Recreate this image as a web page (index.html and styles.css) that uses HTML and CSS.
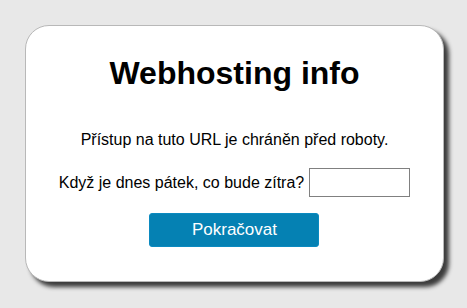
FILE: index.html
```html
<!DOCTYPE html>
<html lang="cs">
<head>
<meta charset="utf-8">
<title>Webhosting info</title>
<link rel="stylesheet" href="styles.css">
</head>
<body>
<div class="card">
  <h1 class="title">Webhosting info</h1>
  <p class="notice">Přístup na tuto URL je chráněn před roboty.</p>
  <form class="form" onsubmit="return false">
    <div class="row">
      <label class="question" for="answer">Když je dnes pátek, co bude zítra?</label>
      <input class="answer" id="answer" type="text">
    </div>
    <button class="submit" type="submit">Pokračovat</button>
  </form>
</div>
</body>
</html>
```

FILE: styles.css
```css
html, body {
  margin: 0;
  padding: 0;
}
body {
  background: #e8e8e8;
  font-family: "Liberation Sans", Arial, sans-serif;
  color: #000;
  width: 467px;
  height: 308px;
  overflow: hidden;
}
.card {
  box-sizing: border-box;
  margin: 25px 0 0 25px;
  width: 419px;
  height: 257px;
  background: #fff;
  border: 1px solid #b8b8b8;
  border-radius: 24px;
  box-shadow: 5px 5px 4px #3c3c3c;
  display: flex;
  flex-direction: column;
  align-items: center;
  padding-top: 29px;
}
.title {
  margin: 0 0 39px;
  font-size: 32px;
  line-height: 37px;
  font-weight: bold;
}
.notice {
  margin: 0 0 19px;
  font-size: 16px;
  line-height: 18px;
}
.form {
  display: flex;
  flex-direction: column;
  align-items: center;
  margin: 0;
}
.row {
  display: flex;
  align-items: center;
  gap: 5px;
  height: 29px;
  margin-bottom: 16px;
}
.question {
  font-size: 16px;
  line-height: 18px;
}
.answer {
  box-sizing: border-box;
  width: 101px;
  height: 29px;
  border: 1px solid #808080;
  border-radius: 0;
  padding: 2px 4px;
  margin: 0;
  font-family: inherit;
  font-size: 16px;
  background: #fff;
}
.submit {
  box-sizing: border-box;
  width: 170px;
  height: 34px;
  background: #0581b3;
  border: 1px solid #0b8ac0;
  border-radius: 3px;
  color: #fff;
  font-family: "Liberation Sans", Arial, sans-serif;
  font-size: 17px;
  padding: 0;
  cursor: pointer;
}
```
